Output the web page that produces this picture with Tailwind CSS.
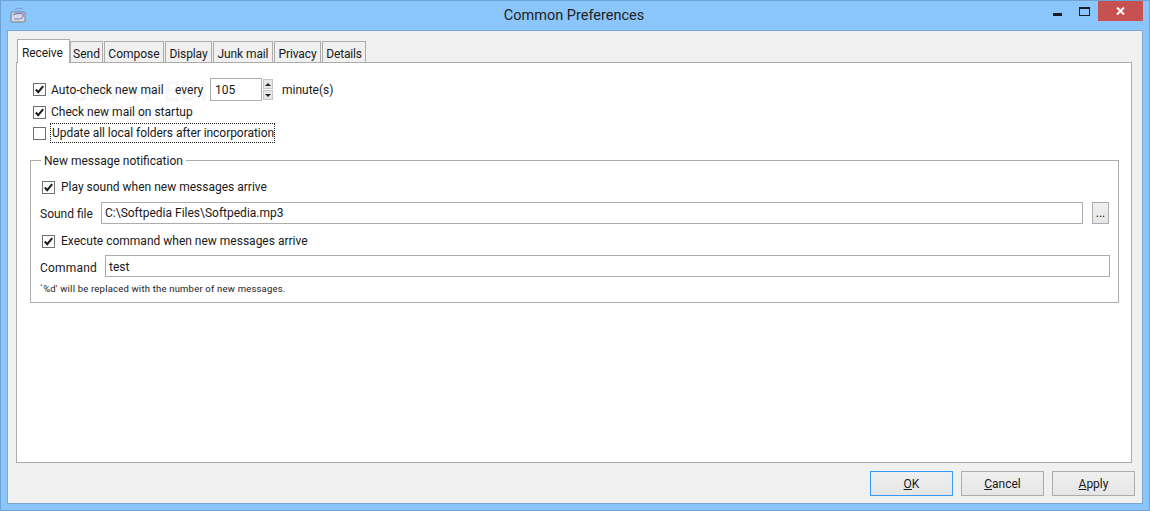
<!DOCTYPE html>
<html lang="en">
<head>
  <meta charset="UTF-8" />
  <title>Common Preferences</title>
  <script src="https://cdn.jsdelivr.net/npm/@tailwindcss/browser@4"></script>
</head>
<body class="w-[1150px] h-[511px] overflow-hidden bg-[#8ac6fb] font-['Roboto',sans-serif] text-[12px] text-[#1a1a1a]">
  <div class="w-full h-full border border-[#6fa3d4] flex flex-col">

    <!-- title bar -->
    <div class="h-[29px] shrink-0 flex items-start">
      <div class="w-[160px] pl-[9px] pt-[6px]">
        <svg width="16" height="16" viewBox="0 0 16 16">
          <path d="M5 2.500c2-1.200 5-1.500 7-1" fill="none" stroke="#8d8fd0" stroke-width="1"/>
          <rect x="1" y="5" width="14" height="10" rx="1" fill="#d5d9e2" stroke="#77808e"/>
          <path d="M3 8c3-2 8-2 10-1 1 2-1 5-4 5H4" fill="none" stroke="#7c80c4" stroke-width="1.200"/>
        </svg>
      </div>
      <div class="flex-1 text-center text-[14.5px] leading-[29px] pr-[2px] text-[#222]">Common Preferences</div>
      <div class="w-[160px] flex justify-end pr-[6px]">
        <div class="w-[9px] h-[3px] bg-[#1e1e1e] mt-[12px] mr-[17px]"></div>
        <div class="w-[11px] h-[9px] border border-[#1e1e1e] border-t-[2px] mt-[6px] mr-[8px]"></div>
        <div class="w-[45px] h-[20px] bg-[#c75050] flex items-center justify-center">
          <svg width="9" height="8" viewBox="0 0 9 8"><path d="M1 0.500 8 7.500M8 0.500 1 7.500" stroke="#fff" stroke-width="2"/></svg>
        </div>
      </div>
    </div>

    <!-- dialog body -->
    <div class="ml-[6px] mr-[6px] h-[474px] border border-[#7ba6d0] bg-[#f0f0f0] pl-[8px] pr-[10px] pt-[8px] flex flex-col">

      <!-- tabs -->
      <div class="flex items-end h-[23px] pl-[1px] gap-[1px] relative z-10">
        <div class="w-[53px] h-[24px] -mb-px bg-white border border-b-0 border-[#acacac] pl-[4px] leading-[26px] tracking-[-0.1px]">Receive</div>
        <div class="w-[33px] h-[21px] bg-[#f0f0f0] border border-b-0 border-[#acacac] text-center leading-[24px] -ml-px">Send</div>
        <div class="w-[60px] h-[21px] bg-[#f0f0f0] border border-b-0 border-[#acacac] text-center leading-[24px]">Compose</div>
        <div class="w-[47px] h-[21px] bg-[#f0f0f0] border border-b-0 border-[#acacac] text-center leading-[24px] -tracking-[0.1px]">Display</div>
        <div class="w-[60px] h-[21px] bg-[#f0f0f0] border border-b-0 border-[#acacac] text-center leading-[24px] -tracking-[0.1px]">Junk mail</div>
        <div class="w-[47px] h-[21px] bg-[#f0f0f0] border border-b-0 border-[#acacac] text-center leading-[24px] -tracking-[0.1px]">Privacy</div>
        <div class="w-[44px] h-[21px] bg-[#f0f0f0] border border-b-0 border-[#acacac] text-center leading-[24px] -tracking-[0.2px]">Details</div>
      </div>

      <!-- tab pane -->
      <div class="h-[401px] bg-white border border-[#acacac] pl-[13px] pr-[12px] pt-[15px] relative">

        <!-- faint watermark behind the first rows -->
        <div class="absolute left-[54px] top-[13px] text-[28px] leading-[32px] font-bold tracking-[1px] text-[#f7f7f7]">SOFTPEDIA</div>
        <div class="absolute left-[76px] top-[47px] text-[11px] leading-[14px] text-[#f2f2f2]">www.softpedia.com</div>

        <div class="relative">
          <div class="h-[23px] flex items-center ml-[3px]">
            <svg class="mr-[5px]" width="13" height="13" viewBox="0 0 13 13"><rect x="0.500" y="0.500" width="12" height="12" fill="#fff" stroke="#707070"/><path d="M2.800 6.500 5.200 9.200 10.200 3.200" fill="none" stroke="#1c1c1c" stroke-width="2"/></svg>
            <span class="w-[124px] pt-px tracking-[0.1px]">Auto-check new mail</span>
            <span class="w-[35px] pt-px">every</span>
            <div class="w-[52px] h-[23px] border border-[#acacac] bg-white pl-[4px] leading-[22px]">105</div>
            <div class="w-[10px] h-[21px] ml-[1px] flex flex-col gap-[1px]">
              <div class="flex-1 bg-[#e6e6e6] border border-[#c4c4c4] flex items-center justify-center"><div class="w-0 h-0 border-x-[3px] border-x-transparent border-b-[3px] border-b-[#222]"></div></div>
              <div class="flex-1 bg-[#e6e6e6] border border-[#c4c4c4] flex items-center justify-center"><div class="w-0 h-0 border-x-[3px] border-x-transparent border-t-[3px] border-t-[#222]"></div></div>
            </div>
            <span class="ml-[9px] pt-px">minute(s)</span>
          </div>

          <div class="h-[20px] mt-[1px] flex items-center ml-[3px]">
            <svg class="mr-[5px]" width="13" height="13" viewBox="0 0 13 13"><rect x="0.500" y="0.500" width="12" height="12" fill="#fff" stroke="#707070"/><path d="M2.800 6.500 5.200 9.200 10.200 3.200" fill="none" stroke="#1c1c1c" stroke-width="2"/></svg>
            <span>Check new mail on startup</span>
          </div>

          <div class="h-[20px] mt-[1px] flex items-center ml-[3px]">
            <svg class="mr-[4px]" width="13" height="13" viewBox="0 0 13 13"><rect x="0.500" y="0.500" width="12" height="12" fill="#fff" stroke="#707070"/></svg>
            <span class="w-[225px] h-[20px] border border-dotted border-[#222] pl-[1px] leading-[19px] whitespace-nowrap tracking-[-0.05px]">Update all local folders after incorporation</span>
          </div>
        </div>

        <!-- group box -->
        <div class="relative mt-[17px] h-[143px] border border-[#acacac] pl-[9px] pr-[8px] pt-[16px]">
          <div class="absolute left-[10px] top-[-8px] bg-white px-[3px] leading-[16px]">New message notification</div>

          <div class="h-[20px] flex items-center ml-[2px]">
            <svg class="mr-[6px]" width="13" height="13" viewBox="0 0 13 13"><rect x="0.500" y="0.500" width="12" height="12" fill="#fff" stroke="#707070"/><path d="M2.800 6.500 5.200 9.200 10.200 3.200" fill="none" stroke="#1c1c1c" stroke-width="2"/></svg>
            <span>Play sound when new messages arrive</span>
          </div>

          <div class="h-[22px] mt-[5px] flex items-center mr-px">
            <span class="w-[61px] shrink-0 pt-[2px]">Sound file</span>
            <div class="flex-1 h-[22px] border border-[#acacac] bg-white pl-[3px] leading-[21px]">C:\Softpedia Files\Softpedia.mp3</div>
            <div class="w-[17px] h-[22px] ml-[9px] border border-[#acacac] bg-gradient-to-b from-[#f0f0f0] to-[#e5e5e5] text-center leading-[20px]">...</div>
          </div>

          <div class="h-[20px] mt-[7px] flex items-center ml-[2px]">
            <svg class="mr-[6px]" width="13" height="13" viewBox="0 0 13 13"><rect x="0.500" y="0.500" width="12" height="12" fill="#fff" stroke="#707070"/><path d="M2.800 6.500 5.200 9.200 10.200 3.200" fill="none" stroke="#1c1c1c" stroke-width="2"/></svg>
            <span>Execute command when new messages arrive</span>
          </div>

          <div class="h-[22px] mt-[4px] flex items-center">
            <span class="w-[65px] shrink-0 pt-[3px] tracking-[0.2px]">Command</span>
            <div class="flex-1 h-[22px] border border-[#acacac] bg-white pl-[3px] leading-[23px]">test</div>
          </div>

          <div class="mt-[5px] text-[9.500px] leading-[13px] tracking-[0.2px]">`%d' will be replaced with the number of new messages.</div>
        </div>
      </div>

      <!-- footer buttons -->
      <div class="flex justify-end gap-[8px] mt-[8px] -mr-[3px]">
        <div class="w-[83px] h-[25px] border border-[#3399ff] bg-gradient-to-b from-[#f0f0f0] to-[#e5e5e5] text-center leading-[25px]"><u>O</u>K</div>
        <div class="w-[83px] h-[25px] border border-[#acacac] bg-gradient-to-b from-[#f0f0f0] to-[#e5e5e5] text-center leading-[25px]"><u>C</u>ancel</div>
        <div class="w-[83px] h-[25px] border border-[#acacac] bg-gradient-to-b from-[#f0f0f0] to-[#e5e5e5] text-center leading-[25px]"><u>A</u>pply</div>
      </div>
    </div>
  </div>
</body>
</html>
